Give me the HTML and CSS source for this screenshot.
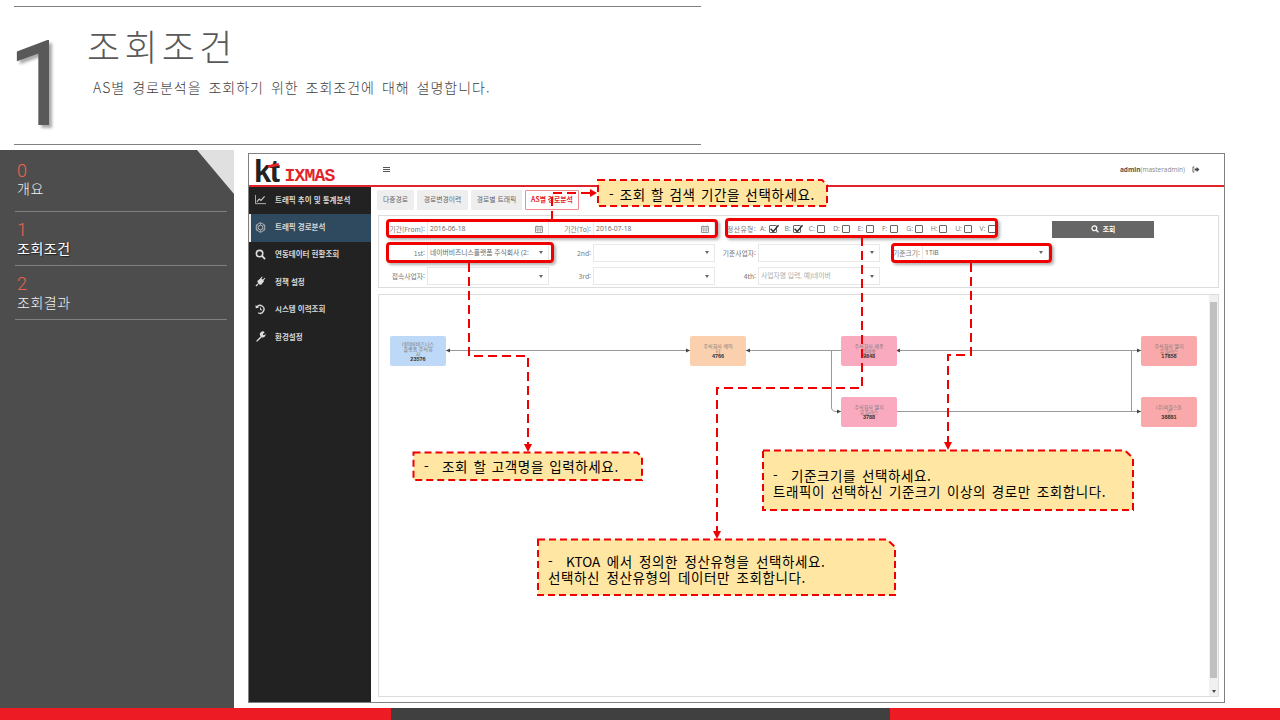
FILE: index.html
```html
<!DOCTYPE html>
<html lang="ko">
<head>
<meta charset="utf-8">
<title>조회조건</title>
<link rel="stylesheet" href="styles.css">
</head>
<body>
<div class="slide">
  <header class="head">
    <div class="big-num">1</div>
    <div class="head-text">
      <h1 class="title">조회조건</h1>
      <p class="subtitle">AS별 경로분석을 조회하기 위한 조회조건에 대해 설명합니다.</p>
    </div>
  </header>

  <div class="body">
    <nav class="toc">
      <div class="fold"></div>
      <div class="toc-item first"><span class="toc-num">0</span><span class="toc-label">개요</span></div>
      <div class="toc-item active"><span class="toc-num">1</span><span class="toc-label">조회조건</span></div>
      <div class="toc-item"><span class="toc-num">2</span><span class="toc-label">조회결과</span></div>
    </nav>

    <main class="stage">
      <div class="window">
        <div class="topbar">
          <div class="logo">
            <span class="logo-kt">kt</span><span class="logo-swoosh"></span>
            <span class="logo-ix">IXMAS</span>
          </div>
          <div class="burger"><i></i><i></i><i></i></div>
          <div class="user"><b>admin</b>(masteradmin)</div>
          <svg class="logout" viewBox="0 0 10 8"><path d="M3 .8H1.2v6.4H3" fill="none" stroke="#444" stroke-width="1"/><path d="M3.2 2.8h2.6V1L9.4 4 5.8 7V5.2H3.2z" fill="#444"/></svg>
        </div>
        <div class="app">
          <aside class="menu">
            <div class="menu-item">
              <svg class="mi" viewBox="0 0 12 10"><path d="M.5 0v9.500H12" fill="none" stroke="#ccc" stroke-width=".9"/><path d="M2 7.500 4.500 4.500 6.500 6 10.500 1.500" fill="none" stroke="#ccc" stroke-width="1.2"/></svg>
              <span>트래픽 추이 및 통계분석</span>
            </div>
            <div class="menu-item selected">
              <svg class="mi" viewBox="0 0 12 12"><path d="M6 .7 10.600 3.300v5.400L6 11.300 1.400 8.700V3.300z" fill="none" stroke="#bbb" stroke-width="1"/><circle cx="6" cy="6" r="2.500" fill="none" stroke="#bbb" stroke-width="1"/><path d="M6 1v2.500M6 8.500V11M1.500 3.500l2.300 1.300M8.200 7.200l2.300 1.300M10.500 3.500 8.200 4.800M3.800 7.200 1.500 8.500" stroke="#bbb" stroke-width=".7"/></svg>
              <span>트래픽 경로분석</span>
            </div>
            <div class="menu-item">
              <svg class="mi" viewBox="0 0 12 12"><circle cx="5" cy="5" r="3.500" fill="none" stroke="#ddd" stroke-width="1.700"/><path d="M7.600 7.600 11 11" stroke="#ddd" stroke-width="2"/></svg>
              <span>연동데이터 현황조회</span>
            </div>
            <div class="menu-item">
              <svg class="mi" viewBox="0 0 12 12"><path d="M1 11 3.200 8.800" stroke="#ddd" stroke-width="1.400"/><path d="M2.500 5.500 6.500 2.200 10 5.500 6.800 9.500C5 10 3.200 9.400 2.500 5.500z" fill="#ddd"/><path d="M6 3 8 .8M8.600 4.400l2.400-2" stroke="#ddd" stroke-width="1.100"/></svg>
              <span>정책 설정</span>
            </div>
            <div class="menu-item">
              <svg class="mi" viewBox="0 0 12 12"><path d="M2 3.300A4.300 4.300 0 1 1 3.400 9.600" fill="none" stroke="#ddd" stroke-width="1.400"/><path d="M.6 1 .8 4.600 4.400 4z" fill="#ddd"/><path d="M6 3.800V6.400H8" fill="none" stroke="#ddd" stroke-width="1"/></svg>
              <span>시스템 이력조회</span>
            </div>
            <div class="menu-item">
              <svg class="mi" viewBox="0 0 12 12"><path d="M1.200 10.800 6.200 5.600A3 3 0 0 1 10.600 1.400L8.600 3.400 9 4.400l1 .3 1.400-1.600A3.100 3.100 0 0 1 7.400 6.800L2.300 11.600z" fill="#ddd"/></svg>
              <span>환경설정</span>
            </div>
          </aside>

          <section class="content">
            <div class="tabs">
              <div class="tab tab-w1">다중경로</div>
              <div class="tab tab-w2">경로변경이력</div>
              <div class="tab tab-w2">경로별 트래픽</div>
              <div class="tab tab-on">AS별 경로분석</div>
            </div>

            <div class="filters">
              <div class="row">
                <label class="lb lb1">기간(From):</label>
                <div class="field f1"><span>2016-06-18</span><svg class="cal" viewBox="0 0 8 8"><path d="M.5 1.500h7v6h-7z" fill="none" stroke="#999"/><path d="M.5 3h7M2 .3v2M6 .3v2M2.800 3v4M5.200 3v4M.5 5h7" stroke="#999" stroke-width=".7"/></svg></div>
                <label class="lb lb2">기간(To):</label>
                <div class="field f1"><span>2016-07-18</span><svg class="cal" viewBox="0 0 8 8"><path d="M.5 1.500h7v6h-7z" fill="none" stroke="#999"/><path d="M.5 3h7M2 .3v2M6 .3v2M2.800 3v4M5.200 3v4M.5 5h7" stroke="#999" stroke-width=".7"/></svg></div>
                <label class="lb lb-type">정산유형:</label>
                <div class="checks">
                  <div class="chk"><span>A:</span><i class="box"><svg viewBox="0 0 9 9"><path d="M1.500 4.200 3.800 6.800 8.600 1" fill="none" stroke="#333" stroke-width="1.300"/></svg></i></div>
                  <div class="chk"><span>B:</span><i class="box"><svg viewBox="0 0 9 9"><path d="M1.500 4.200 3.800 6.800 8.600 1" fill="none" stroke="#333" stroke-width="1.300"/></svg></i></div>
                  <div class="chk"><span>C:</span><i class="box"></i></div>
                  <div class="chk"><span>D:</span><i class="box"></i></div>
                  <div class="chk"><span>E:</span><i class="box"></i></div>
                  <div class="chk"><span>F:</span><i class="box"></i></div>
                  <div class="chk"><span>G:</span><i class="box"></i></div>
                  <div class="chk"><span>H:</span><i class="box"></i></div>
                  <div class="chk"><span>U:</span><i class="box"></i></div>
                  <div class="chk"><span>V:</span><i class="box"></i></div>
                </div>
                <button class="search"><svg viewBox="0 0 12 12"><circle cx="5" cy="5" r="3.600" fill="none" stroke="#fff" stroke-width="1.800"/><path d="M7.600 7.600 11 11" stroke="#fff" stroke-width="2"/></svg>조회</button>
              </div>
              <div class="row">
                <label class="lb lb1">1st:</label>
                <div class="field f1"><span>네이버비즈니스플랫폼 주식회사 (2:</span><i class="caret"></i></div>
                <label class="lb lb2">2nd:</label>
                <div class="field f1"><span></span><i class="caret"></i></div>
                <label class="lb lb3">기준사업자:</label>
                <div class="field f1"><span></span><i class="caret"></i></div>
                <label class="lb lb4">기준크기:</label>
                <div class="field f4"><span>1TiB</span><i class="caret"></i></div>
              </div>
              <div class="row">
                <label class="lb lb1">접속사업자:</label>
                <div class="field f1"><span></span><i class="caret"></i></div>
                <label class="lb lb2">3rd:</label>
                <div class="field f1"><span></span><i class="caret"></i></div>
                <label class="lb lb3">4th:</label>
                <div class="field f1"><span class="ph">사업자명 입력, 예)네이버</span><i class="caret"></i></div>
              </div>
            </div>

            <div class="canvas">
              <svg class="links" viewBox="0 0 841 403">
                <path class="ln" d="M67 55.500H311M367 55.500H462M517 55.500H762M517 116.500H762M452.500 55.500V112Q452.500 116.500 457 116.500H462M752.500 55.500V116.500"/>
                <path class="ah" d="M67 55.500l4-2v4zM311 55.500l-4-2v4zM367 55.500l4-2v4zM517 55.500l4-2v4zM762 55.500l-4-2v4zM462 116.500l-4-2v4zM762 116.500l-4-2v4z"/>
              </svg>
              <div class="node blue n1">네이버비즈니스<br>플랫폼 주식회<br>사<b>23576</b></div>
              <div class="node orange n2">주식회사 케이<br>티<b>4766</b></div>
              <div class="node pink n3">주식회사 세종<br>텔레콤<b>9848</b></div>
              <div class="node pink n4">주식회사 엘지<br>유플러스<b>3788</b></div>
              <div class="node rose n5">주식회사 엘지<br>유플러스<b>17858</b></div>
              <div class="node rose n6">(주)피플스톤<br>즈<b>38881</b></div>
              <div class="scroll"><span class="scroll-up"></span><span class="scroll-thumb"></span><span class="scroll-down"></span></div>
            </div>
          </section>
        </div>
      </div>
    </main>
  </div>

  <footer class="foot"><span class="foot-a"></span><span class="foot-b"></span><span class="foot-c"></span></footer>

  <div class="mark mark-a"></div>
  <div class="mark mark-b"></div>
  <div class="mark mark-c"></div>
  <div class="mark mark-d"></div>

  <svg class="overlay" viewBox="0 0 1280 720">
    <path class="dash" d="M552 220V193H584"/>
    <path class="solid" d="M584 193H592"/><path class="head-a" d="M597 193l-7-4v8z"/>
    <path class="dash" d="M469 263V356H528V444"/><path class="head-a" d="M528 452l-4-8h8z"/>
    <path class="dash" d="M862 237V388H717V531"/><path class="head-a" d="M717 539l-4-8h8z"/>
    <path class="dash" d="M971 263V355H948V442"/><path class="head-a" d="M948 450l-4-8h8z"/>
    <path class="note" d="M598 180H822L827 185V206H598z"/>
    <path class="note" d="M413.500 452.500H637L642 457V480H413.500z"/>
    <path class="note" d="M763 450.500H1125L1133 458V510H763z"/>
    <path class="note" d="M538 539.500H887L895 547V595H538z"/>
  </svg>

  <div class="say say-a">- 조회 할 검색 기간을 선택하세요.</div>
  <div class="say say-b"><span class="lead">-</span>조회 할 고객명을 입력하세요.</div>
  <div class="say say-c"><span class="lead">-</span>기준크기를 선택하세요.<br>트래픽이 선택하신 기준크기 이상의 경로만 조회합니다.</div>
  <div class="say say-d"><span class="lead">-</span><span class="latin">KTOA</span> 에서 정의한 정산유형을 선택하세요.<br>선택하신 정산유형의 데이터만 조회합니다.</div>
</div>
</body>
</html>
```
FILE: styles.css
```css
* { box-sizing: border-box; }
html, body { margin: 0; padding: 0; background: #fff; }
body { font-family: "Noto Sans CJK KR", "Liberation Sans", sans-serif; overflow: hidden; }
.slide { position: relative; width: 1280px; height: 720px; display: flex; flex-direction: column; background: #fff; overflow: hidden; }

/* header */
.head { flex: none; width: 687px; height: 139px; margin: 6px 0 5px 14px; border-top: 1px solid #808080; border-bottom: 1px solid #808080; display: flex; }
.big-num { width: 80px; margin: 19px 0 0 -7px; font: 400 118px/118px Roboto, "Liberation Sans", sans-serif; color: #595959; text-shadow: 3px 3px 3px #aaa; }
.head-text { padding-top: 16px; }
.title { margin: 0; font: 300 36px/44px "Noto Sans CJK KR", sans-serif; color: #595959; letter-spacing: 4.300px; }
.subtitle { margin: 10px 0 0 6px; font: 300 14px/20px "Noto Sans CJK KR", sans-serif; color: #404040; letter-spacing: 1px; word-spacing: 2px; }

/* body */
.body { flex: none; height: 558px; display: flex; }
.toc { position: relative; width: 234px; background: #4d4d4d; padding: 12px 7px 0 15px; }
.fold { position: absolute; right: 0; top: 0; width: 37px; height: 44px; background: #e0e0e0; clip-path: polygon(0 0, 100% 0, 100% 100%); }
.toc-item { height: 54px; border-bottom: 1px solid #808080; padding: 9px 0 0 2px; display: flex; flex-direction: column; }
.toc-item.first { height: 50px; padding-top: 0; }
.toc-num { font: 300 18px/18px Roboto, "Liberation Sans", sans-serif; color: #f0624d; }
.toc-label { margin-top: -1px; font: 300 14px/20px "Noto Sans CJK KR", sans-serif; color: #f2f2f2; letter-spacing: .5px; }
.first .toc-label { margin-top: -2px; }
.active .toc-label { color: #fff; font-weight: 400; text-shadow: 1px 1px 1px #222; }
.stage { flex: 1; padding: 3px 0 0 14px; }

.window { width: 977px; height: 550px; border: 1px solid #808080; display: flex; flex-direction: column; background: #fff; }
.topbar { flex: none; height: 33px; border-bottom: 2px solid #e2232a; display: flex; align-items: center; position: relative; }
.logo { width: 134px; height: 31px; display: flex; align-items: flex-end; padding-left: 5px; position: relative; }
.logo-kt { font: 700 31px/27px "Liberation Sans", sans-serif; color: #222; letter-spacing: -1.500px; }
.logo-swoosh { position: absolute; left: 19px; top: 10px; width: 11px; height: 3px; background: #e2232a; transform: rotate(-12deg); }
.logo-ix { font: 700 18px/17px "Liberation Mono", monospace; color: #e2232a; letter-spacing: -0.800px; margin-left: 6px; }
.burger { width: 7px; display: flex; flex-direction: column; gap: 1px; }
.burger i { display: block; height: 1px; background: #555; }
.user { margin-left: auto; font: 6.500px/10px "Open Sans", "Liberation Sans", sans-serif; color: #888; }
.user b { color: #555; }
.logout { width: 8px; height: 7px; margin: 0 24px 0 7px; }

.app { flex: 1; display: flex; min-height: 0; }
.menu { width: 122px; background: #222; flex: none; }
.menu-item { height: 27.400px; display: flex; align-items: center; padding: 0 0 2px 6px; gap: 9px; font: 700 7.500px/10px "Noto Sans CJK KR", sans-serif; color: #d8d8d8; }
.menu-item.selected { background: #2f4a5f; border-left: 2px solid #f0f0f0; padding-left: 4px; }
.mi { width: 11px; height: 11px; flex: none; }

.content { flex: 1; padding: 3px 5px 5px 7px; min-width: 0; }
.tabs { display: flex; gap: 3px; height: 20px; margin: 0 0 5px -1px; }
.tab { height: 20px; background: #eee; border-radius: 1px; font: 6.800px/19px "Noto Sans CJK KR", sans-serif; color: #666; text-align: center; }
.tab-w1 { width: 37px; }
.tab-w2 { width: 51px; }
.tab-on { width: 54px; background: #fff; border: 1px solid #f08a8f; color: #e2232a; font-weight: 700; line-height: 17px; }

.filters { height: 73px; border: 1px solid #ddd; padding: 4px 0 0 0; display: flex; flex-direction: column; gap: 5.500px; }
.row { display: flex; height: 18px; flex: none; align-items: center; }
.lb { font: 6.800px/10px "Noto Sans CJK KR", sans-serif; color: #777; text-align: right; flex: none; padding-right: 2px; white-space: nowrap; }
.lb1 { width: 48px; }
.lb2 { width: 44px; }
.lb3 { width: 43px; }
.lb4 { width: 42px; }
.lb-type { width: 37px; margin-left: 4px; padding-right: 0; letter-spacing: .4px; }
.field { flex: none; height: 18px; border: 1px solid #e8e8e8; background: #fff; display: flex; align-items: center; justify-content: space-between; padding: 0 5px 0 2px; font: 6.800px/10px "Open Sans", "Noto Sans CJK KR", sans-serif; color: #666; white-space: nowrap; overflow: hidden; }
.f1 { width: 122px; }
.f4 { width: 127px; }
.ph { color: #aaa; }
.cal { width: 8px; height: 8px; }
.caret { width: 0; height: 0; border: 2.500px solid transparent; border-top: 3px solid #666; border-bottom: 0; }
.checks { display: flex; margin-left: 4px; width: 272px; flex: none; }
.chk { width: 24.400px; display: flex; align-items: center; font: 6.800px/10px "Open Sans", sans-serif; color: #777; }
.chk span { width: 8.500px; }
.box { width: 8px; height: 8px; border: 1px solid #666; border-radius: 1px; display: block; position: relative; flex: none; }
.box svg { position: absolute; left: -1px; top: -2px; width: 10px; height: 10px; }
.search { flex: none; width: 102px; height: 17px; margin-left: 20px; background: #666; border: 0; padding: 0; color: #fff; font: 700 6.800px/17px "Noto Sans CJK KR", sans-serif; display: flex; align-items: center; justify-content: center; gap: 4px; }
.search svg { width: 8px; height: 8px; }

.canvas { position: relative; height: 403px; margin-top: 6px; border: 1px solid #ddd; background: #fff; }
.links { position: absolute; left: 0; top: 0; width: 841px; height: 403px; }
.ln { fill: none; stroke: #999; stroke-width: 1; }
.ah { fill: #444; }
.node { position: absolute; width: 56px; height: 30px; border-radius: 2px; padding: 0 2px; display: flex; flex-direction: column; justify-content: center; font: 5px/5px "Noto Sans CJK KR", sans-serif; color: #777; text-align: center; }
.node b { display: block; color: #333; font: 700 5.500px/6px "Liberation Sans", sans-serif; }
.blue { background: #bdd9f7; }
.orange { background: #fbd0ae; }
.pink { background: #f9aabf; }
.rose { background: #f9a9a9; }
.n1 { left: 11px; top: 41px; }
.n2 { left: 311px; top: 41px; }
.n3 { left: 462px; top: 41px; }
.n4 { left: 462px; top: 102px; }
.n5 { left: 762px; top: 41px; }
.n6 { left: 762px; top: 102px; }
.scroll { position: absolute; right: 0; top: 0; bottom: 0; width: 9px; background: #f0f0f0; display: flex; flex-direction: column; align-items: center; }
.scroll-up { height: 7px; flex: none; }
.scroll-thumb { width: 7px; height: 376px; background: #c0c0c0; flex: none; }
.scroll-down { margin-top: auto; margin-bottom: 3px; width: 0; height: 0; border: 2px solid transparent; border-top: 3px solid #444; border-bottom: 0; }

/* footer */
.foot { flex: none; height: 12px; display: flex; }
.foot-a { width: 391px; background: #ed1c24; }
.foot-b { width: 499px; background: #404040; }
.foot-c { flex: 1; background: #ed1c24; }

/* red annotation overlay */
.mark { position: absolute; border: 3px solid #f00000; border-radius: 4px; box-shadow: 2px 2px 3px rgba(0,0,0,.3); }
.mark-a { left: 386px; top: 219px; width: 332px; height: 19px; }
.mark-b { left: 725px; top: 218px; width: 273px; height: 20px; }
.mark-c { left: 386px; top: 242px; width: 168px; height: 21px; }
.mark-d { left: 891px; top: 243px; width: 161px; height: 20px; }
.overlay { position: absolute; left: 0; top: 0; width: 1280px; height: 720px; pointer-events: none; }
.dash { fill: none; stroke: #f00000; stroke-width: 2; stroke-dasharray: 9 5; }
.solid { fill: none; stroke: #f00000; stroke-width: 2; }
.head-a { fill: #f00000; }
.note { fill: #ffe6a2; stroke: #f00000; stroke-width: 2; stroke-dasharray: 7 4; }
.say { position: absolute; font: 400 13.500px/16px "Noto Sans CJK KR", sans-serif; color: #000; white-space: nowrap; letter-spacing: 0.600px; word-spacing: 2px; }
.lead { display: inline-block; width: 18px; }
.latin { letter-spacing: 0; }
.say-a { left: 609px; top: 186px; word-spacing: 1px; }
.say-b { left: 424px; top: 458px; word-spacing: 1px; }
.say-c { left: 773px; top: 467px; word-spacing: 1.500px; }
.say-d { left: 548px; top: 553px; }
```
